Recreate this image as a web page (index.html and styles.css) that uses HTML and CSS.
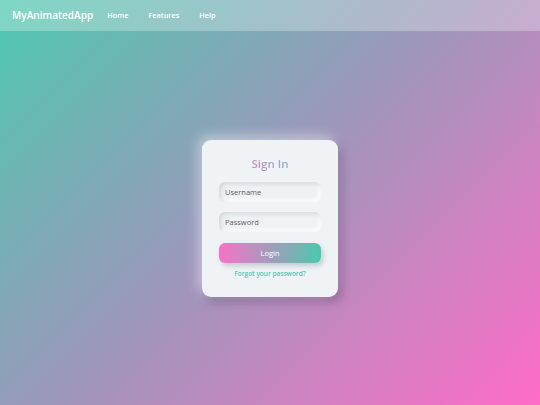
FILE: index.html
```html
<!DOCTYPE html>
<html lang="en">
<head>
<meta charset="utf-8">
<title>MyAnimatedApp</title>
<link rel="stylesheet" href="styles.css">
</head>
<body>
<nav class="navbar">
  <span class="brand">MyAnimatedApp</span>
  <a class="nav-link" href="#">Home</a>
  <a class="nav-link" href="#">Features</a>
  <a class="nav-link" href="#">Help</a>
</nav>
<main class="main">
  <form class="card">
    <h1 class="title">Sign In</h1>
    <input class="field" type="text" placeholder="Username">
    <input class="field" type="password" placeholder="Password">
    <button class="btn" type="button">Login</button>
    <a class="forgot" href="#">Forgot your password?</a>
  </form>
</main>
</body>
</html>
```

FILE: styles.css
```css
* { box-sizing: border-box; }
html, body { margin: 0; height: 100%; }
body {
  font-family: "Open Sans", "DejaVu Sans", sans-serif;
  background: linear-gradient(135deg, #4cc8ae 0%, #a096bb 50%, #ff6cc6 100%);
  display: flex;
  flex-direction: column;
  min-height: 405px;
}
.navbar {
  height: 31px;
  display: flex;
  align-items: center;
  padding-left: 12px;
  padding-bottom: 1px;
  background: rgba(255, 255, 255, 0.28);
  flex: none;
}
.brand {
  color: #fff;
  font-weight: 600;
  font-size: 10px;
  margin-right: 14px;
  letter-spacing: 0.05px;
}
.nav-link {
  color: #fff;
  font-size: 7.3px;
  font-weight: 600;
  text-decoration: none;
  margin-right: 20px;
}
.main {
  flex: 1;
  display: flex;
  align-items: center;
  justify-content: center;
}
.card {
  width: 136px;
  height: 157px;
  background: #eff3f6;
  border-radius: 9px;
  padding: 16px 17px 0;
  display: flex;
  flex-direction: column;
  align-items: center;
  box-shadow: -4px -4px 12px rgba(255, 255, 255, 0.45), 4px 5px 10px rgba(60, 40, 80, 0.3);
  margin-top: 1px;
}
.title {
  margin: 0;
  font-size: 11.5px;
  font-weight: 600;
  line-height: 16px;
  background: linear-gradient(90deg, #cf8dc5, #8ea9c4);
  -webkit-background-clip: text;
  background-clip: text;
  color: transparent;
}
.field {
  width: 102px;
  height: 20px;
  margin-top: 10px;
  border: none;
  outline: none;
  border-radius: 6px;
  background: #eef2f5;
  box-shadow: inset 2px 2px 4px rgba(170, 185, 200, 0.45), inset -2px -2px 4px rgba(255, 255, 255, 0.9);
  padding: 0 6px;
  font-family: inherit;
  font-size: 7.5px;
  color: #555;
}
.field::placeholder { color: #5c5c66; }
.btn {
  width: 102px;
  height: 20px;
  margin-top: 11px;
  border: none;
  border-radius: 6px;
  background: linear-gradient(90deg, #f872c8 0%, #9aa1bb 55%, #4cc8ae 100%);
  color: #fff;
  font-family: inherit;
  font-size: 7.5px;
  font-weight: 400;
  box-shadow: 2px 3px 5px rgba(120, 130, 150, 0.35);
}
.forgot {
  margin-top: 6px;
  font-size: 6.5px;
  color: #4cc8ae;
  text-decoration: none;
  font-weight: 600;
}
```
